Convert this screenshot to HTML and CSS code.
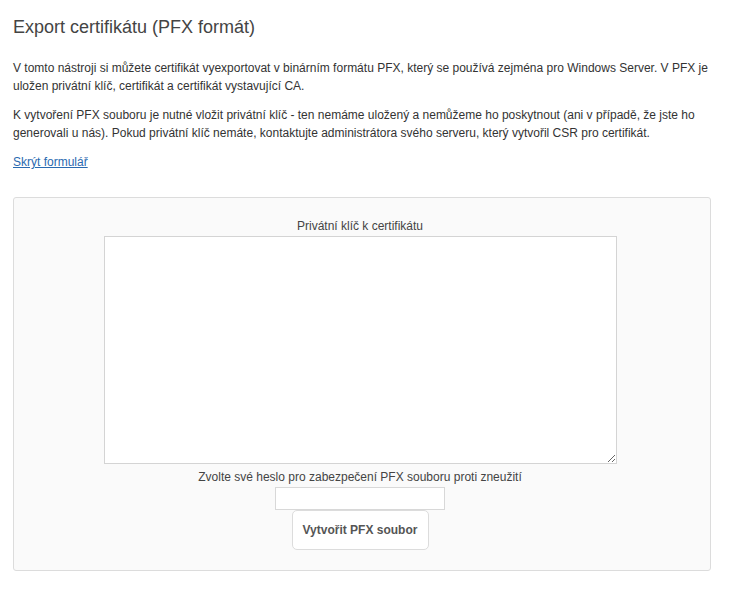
FILE: index.html
```html
<!DOCTYPE html>
<html lang="cs">
<head>
<meta charset="utf-8">
<title>Export certifikátu (PFX formát)</title>
<link rel="stylesheet" href="styles.css">
</head>
<body>
<div class="page">
  <h1 class="title">Export certifikátu (PFX formát)</h1>
  <p class="text">V tomto nástroji si můžete certifikát vyexportovat v binárním formátu PFX, který se používá zejména pro Windows Server. V PFX je uložen privátní klíč, certifikát a certifikát vystavující CA.</p>
  <p class="text">K vytvoření PFX souboru je nutné vložit privátní klíč - ten nemáme uložený a nemůžeme ho poskytnout (ani v případě, že jste ho generovali u nás). Pokud privátní klíč nemáte, kontaktujte administrátora svého serveru, který vytvořil CSR pro certifikát.</p>
  <p class="text"><a class="link" href="#">Skrýt formulář</a></p>
  <form class="panel">
    <label class="label" for="key">Privátní klíč k certifikátu</label>
    <textarea class="key" id="key"></textarea>
    <label class="label label-pass" for="pass">Zvolte své heslo pro zabezpečení PFX souboru proti zneužití</label>
    <input class="pass" id="pass" type="password">
    <button class="btn" type="button">Vytvořit PFX soubor</button>
  </form>
</div>
</body>
</html>
```
FILE: styles.css
```css
html, body {
  margin: 0;
  padding: 0;
  background: #fff;
}
body {
  font-family: "Liberation Sans", Arial, sans-serif;
  color: #333;
  font-size: 12px;
}
.page {
  width: 698px;
  padding: 13px 0 0 13px;
}
.title {
  margin: 0 0 18px;
  font-size: 18px;
  font-weight: normal;
  line-height: 28px;
  color: #444;
}
.text {
  margin: 0 0 11px;
  line-height: 18px;
}
.link {
  color: #2a6ab0;
  text-decoration: underline;
}
.panel {
  margin-top: 26px;
  box-sizing: border-box;
  height: 374px;
  background: #fafafa;
  border: 1px solid #dcdcdc;
  border-radius: 3px;
  display: flex;
  flex-direction: column;
  align-items: center;
  padding: 19px 4px 0 0;
}
.label {
  display: block;
  line-height: 18px;
  color: #444;
}
.key {
  display: block;
  box-sizing: border-box;
  width: 513px;
  height: 228px;
  margin: 1px 0 4px 0;
  border: 1px solid #d4d4d4;
  background: #fff;
  resize: both;
}
.pass {
  display: block;
  box-sizing: border-box;
  width: 170px;
  height: 23px;
  margin: 1px 0 0 0;
  border: 1px solid #d8d8d8;
  background: #fff;
  padding: 0;
}
.btn {
  display: block;
  box-sizing: border-box;
  width: 137px;
  height: 40px;
  margin: 0;
  border: 1px solid #dcdcdc;
  border-radius: 5px;
  background: #fff;
  font-family: "Liberation Sans", Arial, sans-serif;
  font-size: 12px;
  font-weight: bold;
  color: #555;
  padding: 0;
}
```
